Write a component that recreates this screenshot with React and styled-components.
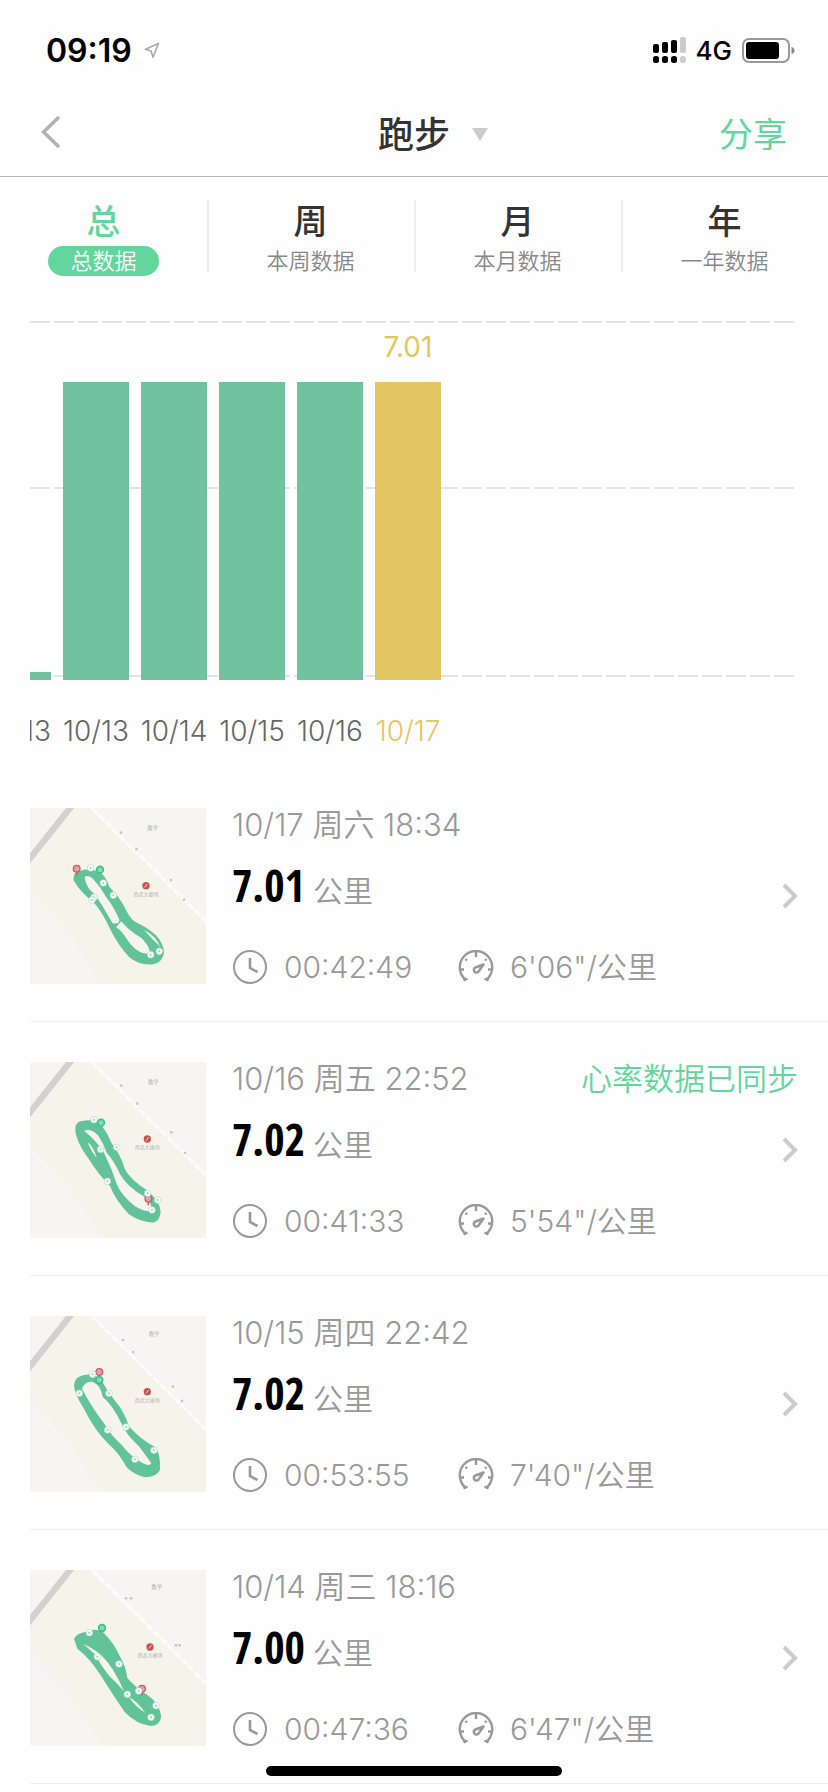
import styled, { createGlobalStyle } from "styled-components";

const GlobalStyle = createGlobalStyle`
  * {
    box-sizing: border-box;
  }

  body {
    margin: 0;
    background: #fefefe;
    font-family: Inter, "Noto Sans CJK SC", sans-serif;
  }

  button {
    padding: 0;
    border: 0;
    background: none;
    font: inherit;
    color: inherit;
    cursor: pointer;
  }

  svg {
    display: block;
    flex: none;
  }
`;

const StatusBar = styled.div`
  display: flex;
  align-items: center;
  justify-content: space-between;
  height: 88px;
  padding: 12px 33px 0 46px;
  color: #000;
`;

const StatusGroup = styled.div`
  display: flex;
  align-items: center;
  gap: ${(p) => p.$gap};
`;

const Clock = styled.span`
  font-size: 32px;
  font-weight: 600;
`;

const Network = styled.span`
  font-size: 26px;
  font-weight: 500;
`;

const NavBar = styled.header`
  display: grid;
  grid-template-columns: 1fr auto 1fr;
  align-items: center;
  height: 89px;
  padding: 0 41px;
  border-bottom: 1px solid #b2b2b2;
`;

const Title = styled.h1`
  margin: 0;
  font-size: 36px;
  font-weight: 500;
  color: #333;
`;

const NavEnd = styled.div`
  display: flex;
  align-items: center;
  justify-content: space-between;
  padding-left: 22px;
`;

const SportButton = styled.button`
  padding-top: 4px !important;
`;

const ShareButton = styled.button`
  font-size: 34px !important;
  color: #62d69c !important;
`;

const Tabs = styled.nav`
  display: grid;
  grid-template-columns: repeat(4, 1fr);
  padding: 23px 0 0;
`;

const Tab = styled.button`
  display: flex;
  flex-direction: column;
  align-items: center;
  gap: 2px;
  position: relative;

  & + &::before {
    content: "";
    position: absolute;
    left: 0;
    top: 0;
    width: 2px;
    height: 72px;
    background: #eee;
  }
`;

const TabName = styled.span`
  font-size: 34px;
  font-weight: 500;
  line-height: 44px;
  color: ${(p) => (p.$active ? "#62d69c" : "#333")};
`;

const TabHint = styled.span`
  padding: 0 22px;
  border-radius: 15px;
  font-size: 22px;
  font-weight: 350;
  line-height: 30px;
  color: ${(p) => (p.$active ? "#fff" : "#888")};
  background: ${(p) => (p.$active ? "#62d69c" : "transparent")};
`;

const Chart = styled.section`
  position: relative;
  margin: 45px 34px 0 30px;
  overflow: hidden;
`;

const GridLine = styled.div`
  position: absolute;
  left: 0;
  right: 0;
  top: ${(p) => p.$top}px;
  height: 2px;
  background: repeating-linear-gradient(
    to right,
    #e4e4e4 0 20px,
    transparent 20px 24px
  );
`;

/* scrolled so that the oldest day is partly out of view */
const Columns = styled.div`
  display: flex;
  align-items: flex-end;
  gap: 12px;
  height: 430px;
  margin-left: -45px;
  position: relative;
`;

const Column = styled.button`
  display: flex;
  flex-direction: column;
  align-items: center;
  flex: none;
  width: 66px;
  font-size: 28px !important;
  color: ${(p) => (p.$active ? "#e3c664" : "#666")} !important;
`;

const ColumnValue = styled.span`
  line-height: 26px;
  margin-bottom: 22px;
`;

const ColumnBar = styled.span`
  width: 100%;
  background: ${(p) => (p.$active ? "#e3c664" : "#71c39f")};
`;

const ColumnDate = styled.span`
  margin-top: 31px;
  font-weight: 300;
  line-height: 40px;
`;

const List = styled.main`
  margin-top: 17px;
`;

const Row = styled.a`
  display: flex;
  gap: 26px;
  margin-left: 30px;
  padding: 40px 30px 37px 0;
  border-bottom: 1px solid #eee;
  color: #999;
  font-size: 30px;
  font-weight: 350;
  text-decoration: none;
`;

const RowBody = styled.div`
  flex: 1;
  display: flex;
  flex-direction: column;
  line-height: 34px;
`;

const RowHead = styled.div`
  display: flex;
  justify-content: space-between;
  font-size: 31px;
`;

const Synced = styled.span`
  color: #62d69c;
`;

const RowMiddle = styled.div`
  display: flex;
  align-items: center;
  justify-content: space-between;
  height: 108px;
`;

const Distance = styled.div`
  display: flex;
  align-items: baseline;
  gap: 8px;
  padding-bottom: 16px;
`;

const DistanceValue = styled.strong`
  font-family: "Open Sans Condensed", "Roboto Condensed", sans-serif;
  font-size: 44px;
  font-weight: 700;
  color: #000;
`;

const Stats = styled.div`
  display: grid;
  grid-template-columns: 226px 1fr;
`;

const Stat = styled.div`
  display: flex;
  align-items: center;
  gap: 16px;
`;

const HomeIndicator = styled.div`
  position: fixed;
  bottom: 16px;
  left: 50%;
  width: 296px;
  height: 10px;
  margin-left: -148px;
  border-radius: 5px;
  background: #000;
`;

const tabs = [
  { name: "总", hint: "总数据" },
  { name: "周", hint: "本周数据" },
  { name: "月", hint: "本月数据" },
  { name: "年", hint: "一年数据" },
];

const days = [
  { id: 1, date: "10/13", height: 8 },
  { id: 2, date: "10/13", height: 298 },
  { id: 3, date: "10/14", height: 298 },
  { id: 4, date: "10/15", height: 298 },
  { id: 5, date: "10/16", height: 298 },
  { id: 6, date: "10/17", height: 298, value: "7.01" },
];

const runs = [
  {
    date: "10/17 周六 18:34",
    distance: "7.01",
    duration: "00:42:49",
    pace: "6'06\"/公里",
    map: {
      outer:
        "M130 215Q130 193 150 189Q172 180 205 190Q228 203 238 236Q264 262 280 290Q298 330 316 342Q352 358 378 382Q402 408 402 436Q396 464 370 469Q330 474 298 448Q262 408 240 362Q216 310 188 280Q150 252 130 215Z",
      holes: [
        "M164 207Q176 198 192 216Q214 240 228 266Q250 294 268 334Q270 350 248 346Q232 320 216 292Q196 258 180 246Q166 228 164 207Z",
        "M274 340Q296 368 334 390Q354 408 360 432Q350 442 326 430Q302 414 286 386Q272 366 258 358Z",
        "M342 366Q380 384 392 420Q386 410 370 396Z",
      ],
      kms: [[182, 180], [220, 225], [250, 262], [192, 268], [186, 276], [362, 440], [388, 430]],
      start: [210, 185],
      end: [140, 182],
      poi: [348, 233],
      label: [368, 67],
      dots: [[273, 74], [319, 124], [423, 216], [462, 275]],
    },
  },
  {
    date: "10/16 周五 22:52",
    synced: true,
    distance: "7.02",
    duration: "00:41:33",
    pace: "5'54\"/公里",
    map: {
      outer:
        "M136 200Q136 178 160 176Q190 170 214 188Q234 216 244 242Q274 282 284 320Q300 352 350 384Q388 414 392 448Q390 478 370 482Q330 480 296 456Q256 414 240 372Q204 336 176 290Q136 236 136 200Z",
      holes: [
        "M162 206Q182 198 204 220Q220 244 230 272Q252 296 270 336Q292 376 346 406Q368 424 364 444Q350 454 314 432Q274 400 260 366Q246 320 222 272Q200 236 162 206Z",
        "M172 240Q190 252 200 288Q184 268 172 240Z",
      ],
      kms: [[192, 173], [212, 262], [260, 256], [232, 358], [353, 394], [383, 414], [366, 444]],
      start: [213, 182],
      end: [355, 410],
      poi: [352, 231],
      label: [370, 65],
      dots: [[274, 71], [322, 125], [424, 211], [465, 273]],
    },
  },
  {
    date: "10/15 周四 22:42",
    distance: "7.02",
    duration: "00:53:55",
    pace: "7'40\"/公里",
    map: {
      outer:
        "M132 206Q134 184 160 178Q190 170 214 192Q232 226 256 256Q284 288 296 330Q334 372 376 394Q392 412 390 462Q378 484 346 484Q314 478 290 454Q268 412 238 386Q194 344 162 278Q134 236 132 206Z",
      holes: [
        "M156 218Q166 194 188 198Q212 206 218 242Q250 270 274 322Q288 356 326 390Q348 418 364 442Q358 454 332 438Q298 418 276 388Q244 360 222 322Q184 272 156 218Z",
      ],
      kms: [[188, 175], [148, 232], [237, 232], [288, 333], [233, 342], [372, 403], [315, 430]],
      start: [208, 192],
      end: [208, 168],
      poi: [352, 227],
      label: [372, 59],
      dots: [[279, 72], [310, 108], [429, 212], [456, 255]],
    },
  },
  {
    date: "10/14 周三 18:16",
    distance: "7.00",
    duration: "00:47:36",
    pace: "6'47\"/公里",
    map: {
      outer:
        "M132 206Q140 190 166 186Q190 174 216 184Q250 216 268 256Q288 290 292 324Q316 352 348 372Q388 398 394 440Q388 468 362 468Q318 462 284 426Q244 368 216 322Q180 264 142 236Z",
      holes: [
        "M160 222Q186 232 214 256Q234 276 248 298Q268 330 282 364Q262 340 238 318Q210 282 194 252Q176 236 160 222Z",
        "M296 380Q324 396 346 428Q320 414 296 380Z",
      ],
      kms: [[178, 188], [202, 260], [267, 282], [292, 373], [326, 363], [378, 407], [363, 442]],
      start: [216, 174],
      end: [336, 356],
      poi: [360, 231],
      label: [380, 57],
      dots: [[288, 85], [303, 85], [438, 226], [449, 226]],
    },
  },
];

function LocationIcon() {
  return (
    <svg width="16" height="17" viewBox="0 0 16 17" fill="none" stroke="#aaa" strokeWidth="1.6" strokeLinejoin="round">
      <path d="M14.5 1.5L1.5 7.2L7 9L9 15.2Z" />
    </svg>
  );
}

function SignalIcon() {
  const tops = [7, 5, 3, 0];
  return (
    <svg width="33" height="26" viewBox="0 0 33 26">
      {tops.map((top, i) => (
        <g key={top} fill={i === 3 ? "#ccc" : "#000"}>
          <rect x={i * 9} y={top} width="6" height={16 - top} rx="2" />
          <rect x={i * 9} y="19" width="6" height="7" rx="2.5" />
        </g>
      ))}
    </svg>
  );
}

function BatteryIcon() {
  return (
    <svg width="53" height="25" viewBox="0 0 53 25">
      <rect x="1" y="1" width="46" height="23" rx="6" fill="none" stroke="#999" strokeWidth="2" />
      <rect x="4" y="4" width="33" height="17" rx="3" fill="#000" />
      <path d="M49.5 9Q52.5 10 52.5 12.5Q52.5 15 49.5 16Z" fill="#888" />
    </svg>
  );
}

function BackIcon() {
  return (
    <svg width="20" height="34" viewBox="0 0 20 34" fill="none" stroke="#b2b2b2" strokeWidth="3.6">
      <path d="M18 2L2.5 17L18 32" />
    </svg>
  );
}

function DropdownIcon() {
  return (
    <svg width="16" height="13" viewBox="0 0 16 13">
      <path d="M0 0H16L8 13Z" fill="#ccc" />
    </svg>
  );
}

function ChevronIcon() {
  return (
    <svg width="16" height="28" viewBox="0 0 16 28" fill="none" stroke="#ccc" strokeWidth="4">
      <path d="M2 3L13 14L2 25" />
    </svg>
  );
}

function ClockIcon() {
  return (
    <svg width="36" height="34" viewBox="0 0 36 34" fill="none" stroke="#999">
      <circle cx="18" cy="17" r="16" strokeWidth="2" />
      <path d="M18 8V18L25.5 22" strokeWidth="2.6" />
    </svg>
  );
}

function GaugeIcon() {
  return (
    <svg width="36" height="34" viewBox="0 0 36 34" fill="none" stroke="#999" strokeWidth="2.4">
      <path d="M8 30A16.2 16.2 0 1 1 28 30" />
      <path d="M18 2V7M2.5 19.5H6M33.5 19.5H30M7.5 9L9 10.5M28.5 9L27 10.5M5.5 30.5L9.5 28.5M30.5 30.5L26.5 28.5" />
      <path d="M25.5 14.5L17.5 17.5A2.6 2.6 0 1 0 20.5 21.5Z" strokeWidth="2.6" strokeLinejoin="round" />
    </svg>
  );
}

function TrackMap({ map }) {
  return (
    <svg width="176" height="176" viewBox="0 0 528 528">
      <rect width="528" height="528" fill="#f6f5f4" />
      <path d="M0 160L130 0H180L528 330V528H215L120 380L0 250Z" fill="#f6f3ea" />
      <path d="M185 0L528 340" stroke="#fcfcf9" strokeWidth="9" strokeDasharray="24 5" />
      <path d="M-10 164L128 -10" stroke="#d2d0d1" strokeWidth="19" />
      {map.dots.map(([x, y]) => (
        <circle key={x} cx={x} cy={y} r="4" fill="#c4c4c4" />
      ))}
      <g fill="#aaa" fontSize="16" textAnchor="middle">
        <text x={map.label[0]} y={map.label[1]}>
          教学
        </text>
        <text x={map.poi[0]} y={map.poi[1] + 31} fontSize="15">
          西北大操场
        </text>
      </g>
      <circle cx={map.poi[0]} cy={map.poi[1]} r="11" fill="#c9534f" />
      <path
        d={`M${map.poi[0] - 4} ${map.poi[1] + 5}l8 -10`}
        stroke="#f3d9d4"
        strokeWidth="3"
      />
      <path d={map.outer} fill="#62c298" />
      {map.holes.map((d) => (
        <path key={d} d={d} fill="#f6f4ec" />
      ))}
      <circle cx={map.end[0]} cy={map.end[1]} r="10" fill="#e3a0a0" stroke="#cc5c60" strokeWidth="4" />
      <path d={`M${map.end[0]} ${map.end[1] + 11}v9`} stroke="#a86a62" strokeWidth="5" />
      <circle cx={map.start[0]} cy={map.start[1]} r="10" fill="#7edcb6" stroke="#3fbd8b" strokeWidth="5" />
      {map.kms.map(([x, y]) => (
        <g key={`${x}-${y}`}>
          <circle cx={x} cy={y} r="10" fill="#f6fbf7" stroke="#a9dec5" strokeWidth="2" />
          <circle cx={x} cy={y} r="3" fill="#9bd0b8" />
        </g>
      ))}
    </svg>
  );
}

export default function App() {
  return (
    <>
      <GlobalStyle />
      <StatusBar>
        <StatusGroup $gap="12px">
          <Clock>09:19</Clock>
          <LocationIcon />
        </StatusGroup>
        <StatusGroup $gap="10px">
          <SignalIcon />
          <Network>4G</Network>
          <BatteryIcon />
        </StatusGroup>
      </StatusBar>
      <NavBar>
        <button aria-label="返回">
          <BackIcon />
        </button>
        <Title>跑步</Title>
        <NavEnd>
          <SportButton aria-label="切换运动">
            <DropdownIcon />
          </SportButton>
          <ShareButton>分享</ShareButton>
        </NavEnd>
      </NavBar>
      <Tabs>
        {tabs.map((tab, i) => (
          <Tab key={tab.name}>
            <TabName $active={i === 0}>{tab.name}</TabName>
            <TabHint $active={i === 0}>{tab.hint}</TabHint>
          </Tab>
        ))}
      </Tabs>
      <Chart>
        <GridLine $top={0} />
        <GridLine $top={166} />
        <GridLine $top={354} />
        <Columns>
          {days.map((day) => (
            <Column key={day.id} $active={!!day.value}>
              {day.value && <ColumnValue>{day.value}</ColumnValue>}
              <ColumnBar $active={!!day.value} style={{ height: day.height }} />
              <ColumnDate>{day.date}</ColumnDate>
            </Column>
          ))}
        </Columns>
      </Chart>
      <List>
        {runs.map((run) => (
          <Row key={run.date} href="#">
            <TrackMap map={run.map} />
            <RowBody>
              <RowHead>
                <span>{run.date}</span>
                {run.synced && <Synced>心率数据已同步</Synced>}
              </RowHead>
              <RowMiddle>
                <Distance>
                  <DistanceValue>{run.distance}</DistanceValue>
                  <span>公里</span>
                </Distance>
                <ChevronIcon />
              </RowMiddle>
              <Stats>
                <Stat>
                  <ClockIcon />
                  <span>{run.duration}</span>
                </Stat>
                <Stat>
                  <GaugeIcon />
                  <span>{run.pace}</span>
                </Stat>
              </Stats>
            </RowBody>
          </Row>
        ))}
      </List>
      <HomeIndicator />
    </>
  );
}
